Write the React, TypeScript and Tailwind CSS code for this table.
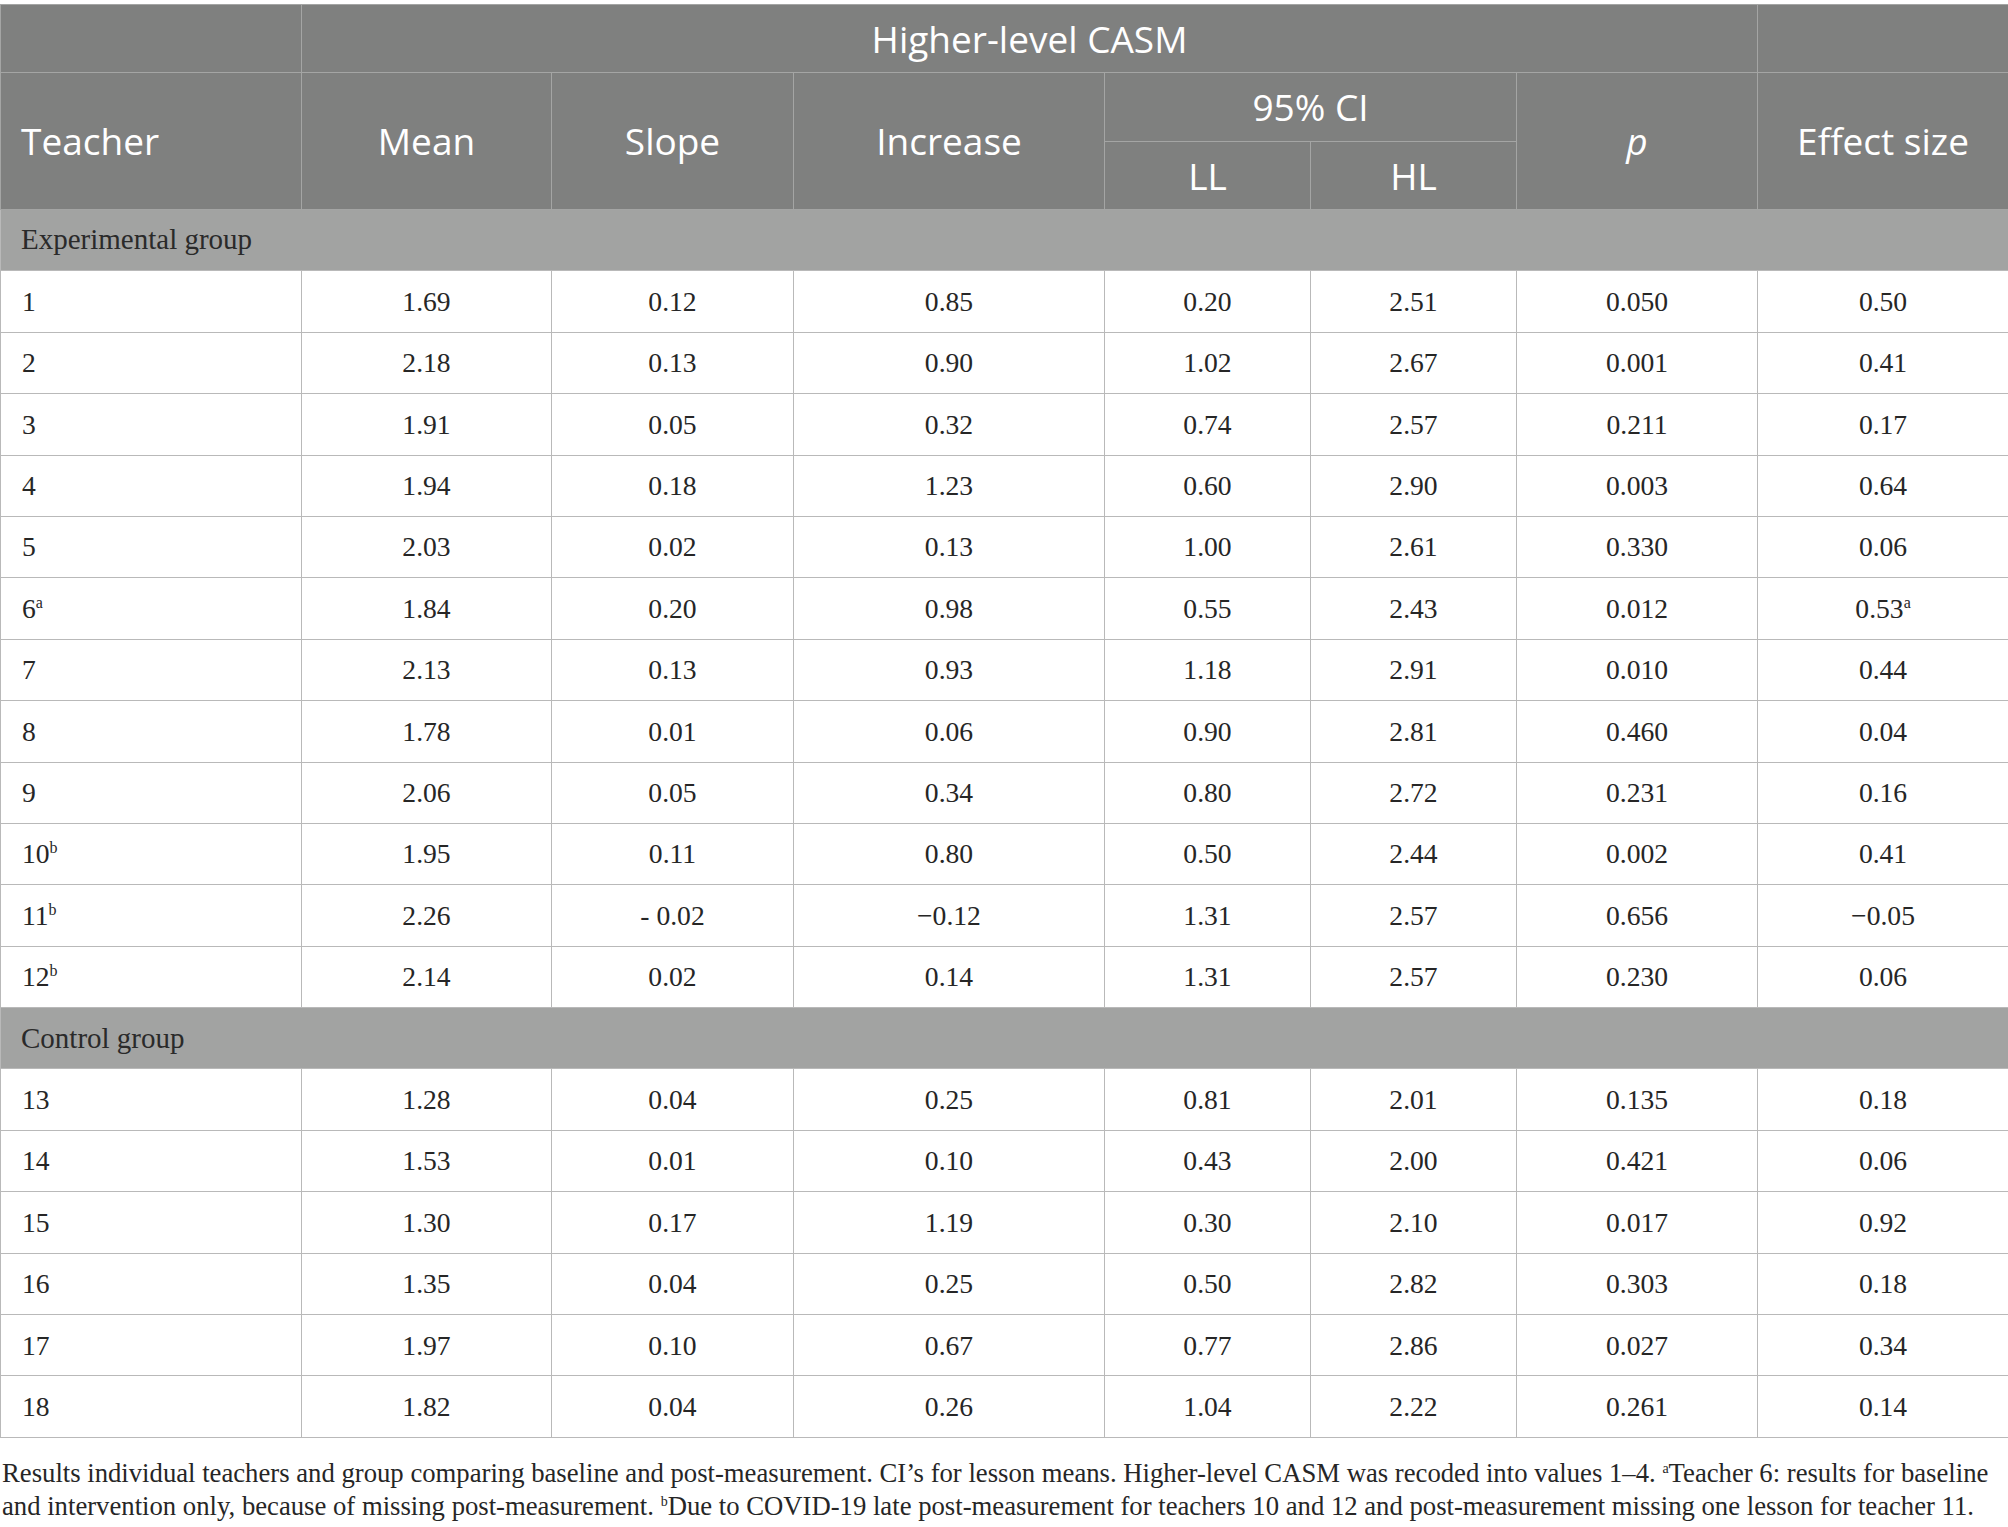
import React from "react";

type Row = { t: string; sup?: string; v: string[]; effSup?: string };

const exp: Row[] = [
  { t: "1", v: ["1.69", "0.12", "0.85", "0.20", "2.51", "0.050", "0.50"] },
  { t: "2", v: ["2.18", "0.13", "0.90", "1.02", "2.67", "0.001", "0.41"] },
  { t: "3", v: ["1.91", "0.05", "0.32", "0.74", "2.57", "0.211", "0.17"] },
  { t: "4", v: ["1.94", "0.18", "1.23", "0.60", "2.90", "0.003", "0.64"] },
  { t: "5", v: ["2.03", "0.02", "0.13", "1.00", "2.61", "0.330", "0.06"] },
  { t: "6", sup: "a", v: ["1.84", "0.20", "0.98", "0.55", "2.43", "0.012", "0.53"], effSup: "a" },
  { t: "7", v: ["2.13", "0.13", "0.93", "1.18", "2.91", "0.010", "0.44"] },
  { t: "8", v: ["1.78", "0.01", "0.06", "0.90", "2.81", "0.460", "0.04"] },
  { t: "9", v: ["2.06", "0.05", "0.34", "0.80", "2.72", "0.231", "0.16"] },
  { t: "10", sup: "b", v: ["1.95", "0.11", "0.80", "0.50", "2.44", "0.002", "0.41"] },
  { t: "11", sup: "b", v: ["2.26", "- 0.02", "\u22120.12", "1.31", "2.57", "0.656", "\u22120.05"] },
  { t: "12", sup: "b", v: ["2.14", "0.02", "0.14", "1.31", "2.57", "0.230", "0.06"] },
];

const ctrl: Row[] = [
  { t: "13", v: ["1.28", "0.04", "0.25", "0.81", "2.01", "0.135", "0.18"] },
  { t: "14", v: ["1.53", "0.01", "0.10", "0.43", "2.00", "0.421", "0.06"] },
  { t: "15", v: ["1.30", "0.17", "1.19", "0.30", "2.10", "0.017", "0.92"] },
  { t: "16", v: ["1.35", "0.04", "0.25", "0.50", "2.82", "0.303", "0.18"] },
  { t: "17", v: ["1.97", "0.10", "0.67", "0.77", "2.86", "0.027", "0.34"] },
  { t: "18", v: ["1.82", "0.04", "0.26", "1.04", "2.22", "0.261", "0.14"] },
];

const serif = "font-['Minion_Pro','Liberation_Serif',serif]";
const sans = "font-['Open_Sans',sans-serif]";

function Sup({ c }: { c: string }) {
  return <span className="text-[16px] relative -top-[10px] align-baseline leading-none">{c}</span>;
}

function DataRow({ r }: { r: Row }) {
  return (
    <tr className="h-[61.4px]">
      <td className="border border-[#b9b9b9] pl-[21px] text-left align-middle">
        {r.t}
        {r.sup && <Sup c={r.sup} />}
      </td>
      {r.v.map((x, i) => (
        <td key={i} className="border border-[#b9b9b9] text-center align-middle">
          {x}
          {i === 6 && r.effSup && <Sup c={r.effSup} />}
        </td>
      ))}
    </tr>
  );
}

function GroupRow({ label }: { label: string }) {
  return (
    <tr className="h-[61.4px] bg-[#a2a3a2]">
      <td colSpan={8} className="border border-[#b9b9b9] pl-[20px] text-left align-middle text-[29px] text-[#2a2a2a]">
        {label}
      </td>
    </tr>
  );
}

export default function App() {
  const hcell = "border border-[#a4a5a4] text-center align-middle font-normal";
  return (
    <div className="w-[2008px] bg-white pt-[4px]">
      <table className={`w-[2008px] table-fixed border-collapse ${serif} text-[27.6px] text-[#262626]`}>
        <colgroup>
          <col className="w-[301px]" />
          <col className="w-[250px]" />
          <col className="w-[242px]" />
          <col className="w-[311px]" />
          <col className="w-[206px]" />
          <col className="w-[206px]" />
          <col className="w-[241px]" />
          <col className="w-[251px]" />
        </colgroup>
        <thead className={`${sans} text-[37px] text-white bg-[#7f807f]`}>
          <tr className="h-[68px]">
            <th className={hcell}></th>
            <th colSpan={6} className={hcell}>
              Higher-level CASM
            </th>
            <th className={hcell}></th>
          </tr>
          <tr className="h-[69px]">
            <th rowSpan={2} className={`${hcell} text-left pl-[20px]`}>
              Teacher
            </th>
            <th rowSpan={2} className={hcell}>
              Mean
            </th>
            <th rowSpan={2} className={hcell}>
              Slope
            </th>
            <th rowSpan={2} className={hcell}>
              Increase
            </th>
            <th colSpan={2} className={hcell}>
              95% CI
            </th>
            <th rowSpan={2} className={`${hcell} italic`}>
              p
            </th>
            <th rowSpan={2} className={hcell}>
              Effect size
            </th>
          </tr>
          <tr className="h-[68px]">
            <th className={hcell}>LL</th>
            <th className={hcell}>HL</th>
          </tr>
        </thead>
        <tbody>
          <GroupRow label="Experimental group" />
          {exp.map((r) => (
            <DataRow key={r.t} r={r} />
          ))}
          <GroupRow label="Control group" />
          {ctrl.map((r) => (
            <DataRow key={r.t} r={r} />
          ))}
        </tbody>
      </table>
      <p className={`${serif} text-[26.7px] leading-[33px] text-[#262626] pt-[19px] pl-[2px] whitespace-nowrap`}>
        Results individual teachers and group comparing baseline and post-measurement. CI’s for lesson means. Higher-level CASM was recoded into values 1–4.{" "}
        <span className="text-[14px] relative -top-[9px] leading-none">a</span>Teacher 6: results for baseline
        <br />
        and intervention only, because of missing post-measurement.{" "}
        <span className="text-[14px] relative -top-[9px] leading-none">b</span>Due to COVID-19 late post-measurement for teachers 10 and 12 and post-measurement missing one lesson for teacher 11.
      </p>
    </div>
  );
}
